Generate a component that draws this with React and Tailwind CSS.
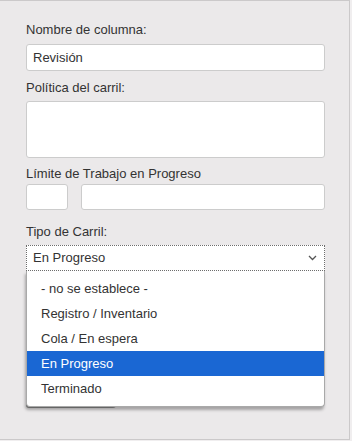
import { useState } from 'react';

const options = ['- no se establece -', 'Registro / Inventario', 'Cola / En espera', 'En Progreso', 'Terminado'];

export default function App() {
    const [selected] = useState('En Progreso');

    return (
        <div className="w-[352px] h-[441px] bg-[#f0eeef] font-['Liberation_Sans',Arial,sans-serif] text-[13px] text-[#333]">
            <div className="w-[350px] h-[440px] bg-[#ebe9ea] border-t border-r border-b border-[#cbc9ca] pl-[26px] pr-[24px] pt-[21px] flex flex-col">
                <label className="leading-[16px] mb-[6px]">Nombre de columna:</label>
                <input
                    defaultValue="Revisión"
                    className="w-[299px] h-[27px] bg-white border border-[#cccccc] rounded-[3px] px-[6px] outline-none text-[13px] text-[#333]"
                />
                <label className="leading-[16px] mt-[9px] mb-[5px]">Política del carril:</label>
                <textarea className="w-[299px] h-[57px] bg-white border border-[#cccccc] rounded-[3px] resize-none outline-none" />
                <label className="leading-[16px] mt-[8px] mb-[2px]">Límite de Trabajo en Progreso</label>
                <div className="flex gap-[13px]">
                    <input className="w-[42px] min-w-0 h-[26px] bg-white border border-[#cccccc] rounded-[3px] outline-none" />
                    <input className="w-[244px] min-w-0 h-[26px] bg-white border border-[#cccccc] rounded-[3px] outline-none" />
                </div>
                <label className="leading-[16px] mt-[14px] mb-[5px]">Tipo de Carril:</label>
                <div className="relative">
                    <div className="w-[299px] h-[26px] bg-white border border-dotted border-[#6d6d6d] flex items-center justify-between pl-[6px] pr-[7px]">
                        <span>{selected}</span>
                        <svg width="9" height="6" viewBox="0 0 9 6" fill="none">
                            <path d="M1 1 L4.5 4.5 L8 1" stroke="#555" strokeWidth="1.3" />
                        </svg>
                    </div>
                    <div className="absolute left-0 top-[26px] z-10 w-[299px] h-[136px] bg-white border border-[#a9a9a9] border-t-0 rounded-b-[4px] shadow-[-1px_3px_3px_rgba(0,0,0,0.3)] pt-[5px]">
                        {options.map((o) => (
                            <div
                                key={o}
                                className={
                                    o === selected
                                        ? 'h-[25px] flex items-center pl-[14px] bg-[#1a67d3] text-white'
                                        : 'h-[25px] flex items-center pl-[14px]'
                                }
                            >
                                {o}
                            </div>
                        ))}
                    </div>
                    <button className="mt-[110px] w-[90px] h-[27px] bg-[#8f8f8f] rounded-[3px]" />
                </div>
            </div>
        </div>
    );
}
